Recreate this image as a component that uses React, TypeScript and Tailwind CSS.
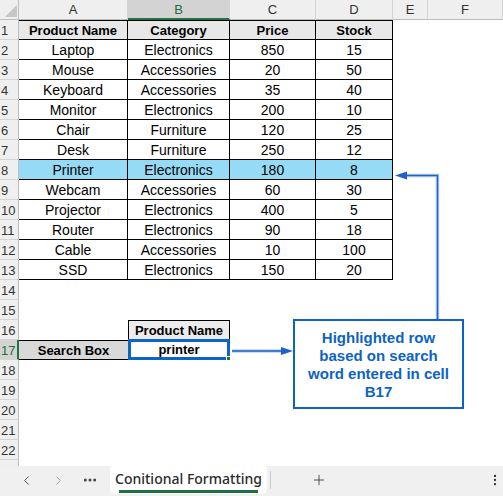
import { ChevronLeft, ChevronRight, MoreHorizontal, MoreVertical, Plus } from "lucide-react";

const products: [string, string, number, number][] = [
  ["Laptop", "Electronics", 850, 15],
  ["Mouse", "Accessories", 20, 50],
  ["Keyboard", "Accessories", 35, 40],
  ["Monitor", "Electronics", 200, 10],
  ["Chair", "Furniture", 120, 25],
  ["Desk", "Furniture", 250, 12],
  ["Printer", "Electronics", 180, 8],
  ["Webcam", "Accessories", 60, 30],
  ["Projector", "Electronics", 400, 5],
  ["Router", "Electronics", 90, 18],
  ["Cable", "Accessories", 10, 100],
  ["SSD", "Electronics", 150, 20],
];

const cols = ["A", "B", "C", "D", "E", "F"];

function ColHeader({ label }: { label: string }) {
  if (label === "B") {
    return (
      <div className="flex items-center justify-center border-r border-r-[#d4d4d4] border-b-2 border-b-[#217346] bg-[#d3d3d3] pt-px text-[13px] text-[#1e6b3c]">
        {label}
      </div>
    );
  }
  return (
    <div className="flex items-center justify-center border-r border-r-[#d4d4d4] border-b border-b-[#bdbdbd] bg-[#efefef] pt-px text-[13px] text-[#333]">
      {label}
    </div>
  );
}

function RowHeader({ n }: { n: number }) {
  if (n === 17) {
    return (
      <div className="flex items-center border-b border-b-[#d4d4d4] border-r-2 border-r-[#217346] bg-[#d3d3d3] pl-px pt-[2px] text-[13px] text-[#1e6b3c]">
        {n}
      </div>
    );
  }
  return (
    <div className="flex items-center border-b border-b-[#d4d4d4] border-r border-r-[#bdbdbd] bg-[#efefef] pl-px pt-[2px] text-[13px] text-[#333]">
      {n <= 22 ? n : ""}
    </div>
  );
}

function Cell({ row, col }: { row: number; col: number }) {
  // table A1:D13
  if (row >= 1 && row <= 13 && col <= 3) {
    if (row === 1) {
      const heads = ["Product Name", "Category", "Price", "Stock"];
      return (
        <div className="flex items-center justify-center border-t border-r border-b border-black bg-[#e8e8e8] pt-px text-[13px] font-bold text-black">
          {heads[col]}
        </div>
      );
    }
    const p = products[row - 2];
    const bg = row === 8 ? "bg-[#96dbf5]" : "bg-white";
    return (
      <div className={`flex items-center justify-center border-r border-b border-black pt-[2px] text-[14px] text-black ${bg}`}>
        {p[col]}
      </div>
    );
  }
  if (row === 16 && col === 1) {
    return (
      <div className="flex items-center justify-center border border-black bg-[#ececec] pt-px text-[13px] font-bold text-black">
        Product Name
      </div>
    );
  }
  if (row === 17 && col === 0) {
    return (
      <div className="flex items-center justify-center border-t border-b border-black bg-[#d9d9d9] pt-px text-[13px] font-bold text-black">
        Search Box
      </div>
    );
  }
  if (row === 17 && col === 1) {
    return (
      <div className="relative -mt-px flex h-[21px] items-center justify-center border-[3px] border-[#0b64c8] bg-white pt-px text-[13px] font-bold text-black">
        printer
        <span className="absolute -right-[4px] -bottom-[4px] h-[5px] w-[5px] border border-white bg-[#217346]" />
      </div>
    );
  }
  return <div />;
}

export default function App() {
  const rows = Array.from({ length: 23 }, (_, i) => i + 1);

  return (
    <div className="flex h-[496px] w-[503px] flex-col overflow-hidden bg-white font-['Liberation_Sans',Arial,sans-serif]">
      {/* sheet */}
      <div className="relative h-[466px] overflow-hidden">
        <div className="grid grid-cols-[19px_109px_102px_86px_77px_35px_75px] auto-rows-[20px]">
          <div className="relative border-r border-r-[#bdbdbd] border-b border-b-[#bdbdbd] bg-[#efefef]">
            <svg className="absolute inset-0" width="19" height="20" viewBox="0 0 19 20">
              <polygon points="17,5 17,17 5,17" fill="#c6c6c6" />
            </svg>
          </div>
          {cols.map((c) => (
            <ColHeader key={c} label={c} />
          ))}
          {rows.map((r) => (
            <div key={r} className="contents">
              <RowHeader n={r} />
              {cols.map((c, ci) => (
                <Cell key={c} row={r} col={ci} />
              ))}
            </div>
          ))}
        </div>

        {/* connectors */}
        <svg className="pointer-events-none absolute inset-0" width="503" height="466" viewBox="0 0 503 466">
          <g fill="none" stroke="#b9d0f2" strokeWidth="3.5">
            <polyline points="437.5,319 437.5,175.5 405,175.5" />
            <line x1="232" y1="351" x2="282" y2="351" />
          </g>
          <g fill="none" stroke="#1c62c9" strokeWidth="1.5">
            <polyline points="437.5,319 437.5,175.5 405,175.5" />
            <line x1="232" y1="351" x2="282" y2="351" />
          </g>
          <polygon points="395,175.5 407,171.5 407,179.5" fill="#1c62c9" />
          <polygon points="293,351 281,347 281,355" fill="#1c62c9" />
        </svg>

        {/* callout */}
        <div className="absolute left-[293px] top-[319px] flex h-[90px] w-[171px] flex-col items-center justify-center border-2 border-[#0b63c6] bg-white pt-[2px] text-center text-[15px] font-bold leading-[18px] text-[#0b63c6]">
          <span>Highlighted row</span>
          <span>based on search</span>
          <span>word entered in cell</span>
          <span>B17</span>
        </div>
      </div>

      {/* sheet tabs */}
      <div className="flex h-[30px] items-start bg-[#f0f0f0] pl-[10px] font-['Noto_Sans',sans-serif] text-[#444]">
        <div className="flex h-[28px] w-[32px] items-center justify-center">
          <ChevronLeft size={15} strokeWidth={1.5} />
        </div>
        <div className="flex h-[28px] w-[32px] items-center justify-center text-[#999]">
          <ChevronRight size={15} strokeWidth={1.5} />
        </div>
        <div className="flex h-[28px] w-[32px] items-center justify-center">
          <MoreHorizontal size={16} strokeWidth={2.5} />
        </div>
        <div className="ml-[4px] flex h-[28px] w-[157px] flex-col items-center rounded-b-[5px] rounded-t-[3px] bg-white">
          <span className="mt-[3px] text-[14px] font-medium leading-[20px] text-[#2b2b2b]">Conitional Formatting</span>
          <span className="mt-[1px] h-[3px] w-[139px] bg-[#1e7145]" />
        </div>
        <div className="ml-[3px] mt-[5px] h-[18px] w-px bg-[#c8c8c8]" />
        <div className="ml-[40px] flex h-[28px] w-[16px] items-center justify-center text-[#333]">
          <Plus size={16} strokeWidth={1.25} />
        </div>
        <div className="ml-auto mr-[1px] flex h-[28px] w-[14px] items-center justify-center text-[#333]">
          <MoreVertical size={14} strokeWidth={2} />
        </div>
      </div>
    </div>
  );
}
